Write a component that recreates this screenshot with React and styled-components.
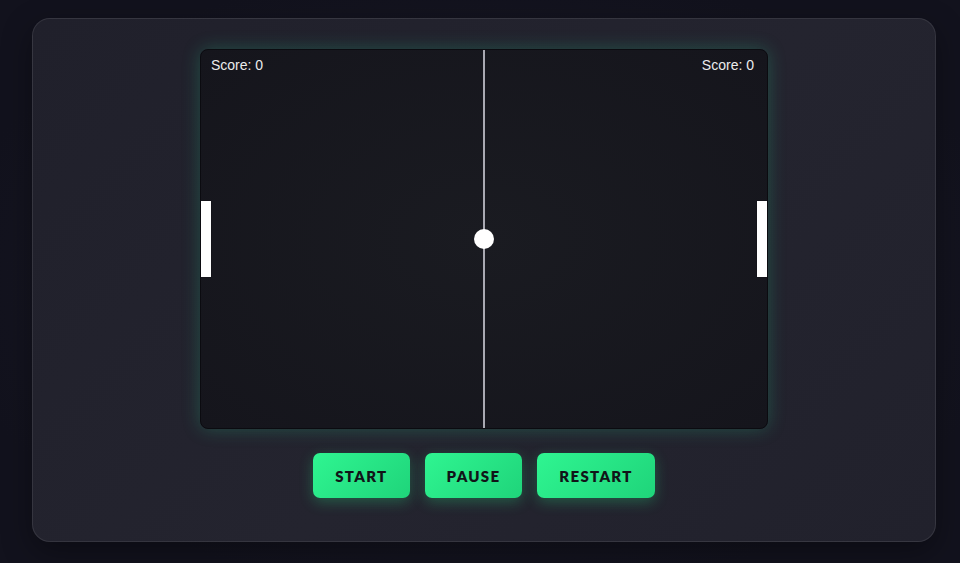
import styled, { createGlobalStyle } from "styled-components";

const GlobalStyle = createGlobalStyle`
  html, body {
    margin: 0;
    padding: 0;
    background: #12121d;
    font-family: "Liberation Sans", Arial, sans-serif;
  }
`;

const Page = styled.div`
  width: 960px;
  height: 563px;
  box-sizing: border-box;
  padding: 18px 24px 21px 32px;
  background: radial-gradient(ellipse at center, #1a1a27 0%, #12121d 80%);
`;

const Panel = styled.div`
  height: 100%;
  box-sizing: border-box;
  border-radius: 18px;
  border: 1px solid rgba(255, 255, 255, 0.09);
  background: linear-gradient(135deg, #20202b 0%, #24242f 55%, #21212c 100%);
  box-shadow: 0 10px 30px rgba(0, 0, 0, 0.35);
  display: flex;
  flex-direction: column;
  align-items: center;
  padding-top: 30px;
  gap: 24px;
`;

const Field = styled.div`
  position: relative;
  width: 568px;
  height: 380px;
  box-sizing: border-box;
  border: 1px solid #0b0b10;
  border-radius: 8px;
  background: radial-gradient(ellipse at center, #1a1b21 0%, #15151c 100%);
  box-shadow: 0 0 18px rgba(40, 200, 140, 0.28);
  overflow: hidden;
`;

const ScoreRow = styled.div`
  position: absolute;
  top: 7px;
  left: 10px;
  right: 13px;
  display: flex;
  justify-content: space-between;
  color: #ececec;
  font-size: 14px;
`;

const CenterLine = styled.div`
  position: absolute;
  top: 0;
  bottom: 0;
  left: 282px;
  width: 2px;
  background: #a9a9b2;
`;

const Paddle = styled.div`
  position: absolute;
  top: 151px;
  ${(p) => (p.$side === "left" ? "left: 0;" : "right: 0;")}
  width: 10px;
  height: 76px;
  background: #ffffff;
  box-shadow: 0 0 1px rgba(0, 0, 0, 0.6);
`;

const Ball = styled.div`
  position: absolute;
  left: 273px;
  top: 179px;
  width: 20px;
  height: 20px;
  border-radius: 50%;
  background: #ffffff;
`;

const Controls = styled.div`
  display: flex;
  gap: 15px;
`;

const Button = styled.button`
  height: 45px;
  padding: 0 22px;
  border: none;
  border-radius: 7px;
  background: linear-gradient(135deg, #2ff591 0%, #1fd47a 100%);
  color: #111418;
  font-family: "Lato", "Open Sans", sans-serif;
  font-weight: 800;
  font-size: 15px;
  letter-spacing: 1.3px;
  box-shadow: 0 4px 14px rgba(40, 220, 130, 0.3);
  cursor: pointer;
`;

const App = () => {
  return (
    <>
      <GlobalStyle />
      <Page>
        <Panel>
          <Field>
            <ScoreRow>
              <span>Score: 0</span>
              <span>Score: 0</span>
            </ScoreRow>
            <CenterLine />
            <Paddle $side="left" />
            <Paddle $side="right" />
            <Ball />
          </Field>
          <Controls>
            <Button>START</Button>
            <Button>PAUSE</Button>
            <Button>RESTART</Button>
          </Controls>
        </Panel>
      </Page>
    </>
  );
};

export default App;
